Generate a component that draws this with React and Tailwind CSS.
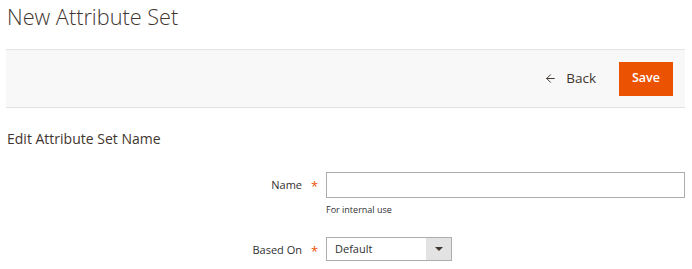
import { ArrowLeft } from 'lucide-react';

function Field({ label, children, note }) {
  return (
    <div className="grid grid-cols-[320px_1fr] items-start">
      <div className="flex items-center justify-end h-[26px] pr-[9px]">
        <span className="text-[11px] text-[#303030]">{label}</span>
        <span className="ml-[9px] w-[6px] text-[13px] text-[#eb5202] leading-none mt-[2px]">*</span>
      </div>
      <div>
        {children}
        {note && <div className="mt-[5px] text-[9px] leading-[13px] text-[#303030]">{note}</div>}
      </div>
    </div>
  );
}

export default function App() {
  return (
    <div className="w-[692px] h-[269px] bg-white pl-[6px] pr-[7px] overflow-hidden font-['Open_Sans',sans-serif]">
      <h1 className="pt-[1px] pl-[1px] h-[49px] text-[21.7px] font-light text-[#41362f] leading-[32px]">
        New Attribute Set
      </h1>

      <div className="flex items-center justify-end h-[59px] bg-[#f8f8f8] border-y border-[#e3e3e3] pr-[12px]">
        <button className="flex items-center gap-[9px] text-[13.5px] text-[#41362f] mr-[23px]">
          <ArrowLeft size={13} strokeWidth={1.8} />
          Back
        </button>
        <button className="h-[34px] w-[54px] bg-[#eb5202] text-white text-[12.5px] font-semibold">
          Save
        </button>
      </div>

      <div className="pt-[20px] pl-[1px] text-[14px] text-[#41362f] leading-[22px]">
        Edit Attribute Set Name
      </div>

      <div className="mt-[22px] flex flex-col gap-[21px]">
        <Field label="Name" note="For internal use">
          <input className="block w-[359px] h-[26px] border border-[#adadad] bg-white outline-none" />
        </Field>
        <Field label="Based On">
          <div className="flex w-[126px] h-[24px] border border-[#adadad] bg-white">
            <span className="flex-1 pl-[8px] text-[11px] text-[#303030] leading-[21px]">Default</span>
            <span className="w-[25px] bg-[#e3e3e3] flex items-center justify-center">
              <span className="w-0 h-0 border-l-[4px] border-r-[4px] border-t-[4px] border-l-transparent border-r-transparent border-t-[#41362f]" />
            </span>
          </div>
        </Field>
      </div>
    </div>
  );
}
